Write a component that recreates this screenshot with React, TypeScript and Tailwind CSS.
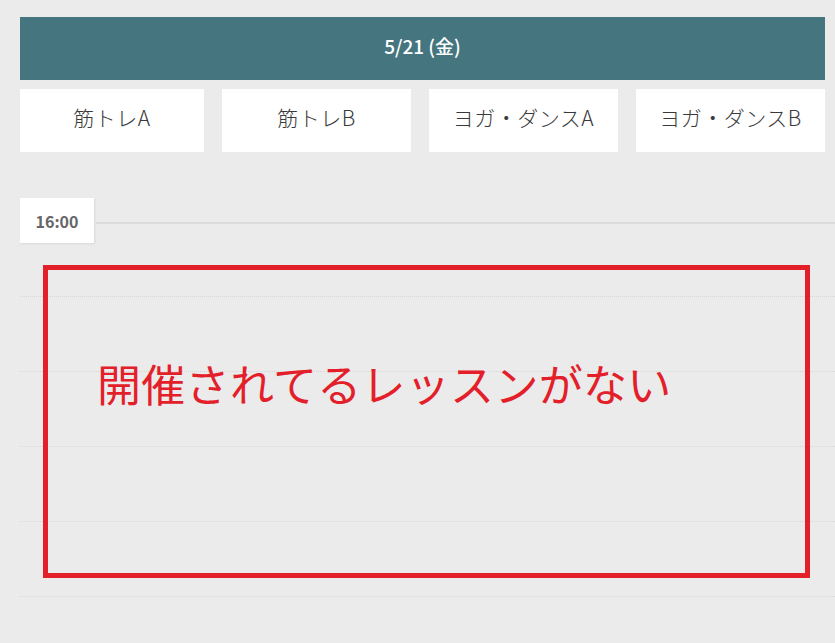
const tabs = ['筋トレA', '筋トレB', 'ヨガ・ダンスA', 'ヨガ・ダンスB'];

export default function App() {
  return (
    <div
      className="relative min-h-[643px] bg-[#ebebeb] pl-5 pt-[17px]"
      style={{ fontFamily: '"Noto Sans CJK JP", "Noto Sans", sans-serif' }}
    >
      <div className="mr-[10px]">
        <div className="flex h-[63px] items-center justify-center bg-[#45767f] pb-[4px] text-[19px] font-medium text-white">
          5/21 (金)
        </div>
        <div className="mt-[9px] grid grid-cols-[184px_1fr_1fr_1fr] gap-[18px]">
          {tabs.map((t) => (
            <div
              key={t}
              className="flex h-[63px] items-center justify-center bg-white pb-[5px] text-[21px] font-light tracking-[0.5px] text-[#3a3a3a]"
            >
              {t}
            </div>
          ))}
        </div>
      </div>

      <div className="mt-[46px]">
        <div className="flex h-[45px]">
          <div className="flex h-[45px] w-[74px] items-center justify-center bg-white text-[16px] font-bold text-[#666] shadow-[1px_1px_2px_rgba(0,0,0,0.08)]">
            16:00
          </div>
          <div className="ml-[2px] mt-[24px] h-[2px] flex-1 bg-[#dcdcdc]" />
        </div>
        <div className="h-[54px] border-b border-dotted border-[#d6d6d6]" />
        {[0, 1, 2, 3].map((i) => (
          <div key={i} className="h-[75px] border-b border-dotted border-[#d6d6d6]" />
        ))}
      </div>

      <div className="absolute left-[43px] top-[265px] h-[313px] w-[767px] border-[5px] border-[#e3202a] pl-[49px] pt-[91px]">
        <p className="text-[44px] leading-none tracking-[0.3px] text-[#e3202a]">開催されてるレッスンがない</p>
      </div>
    </div>
  );
}
